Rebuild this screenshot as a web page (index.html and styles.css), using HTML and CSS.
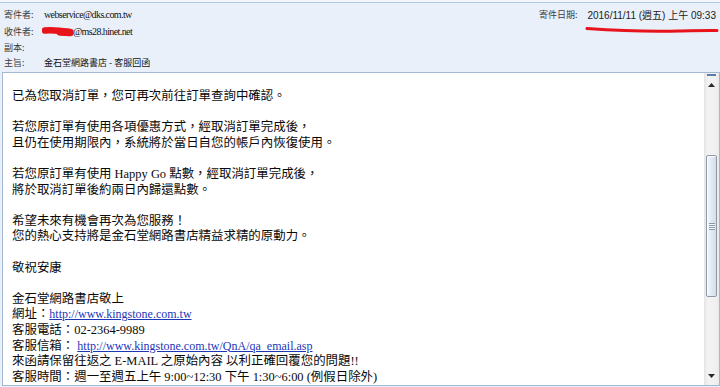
FILE: index.html
```html
<!DOCTYPE html>
<html lang="zh-Hant">
<head>
<meta charset="utf-8">
<title>金石堂網路書店 - 客服回函</title>
<link rel="stylesheet" href="styles.css">
</head>
<body>
<div class="window">
  <div class="topbar"></div>
  <div class="header">
    <div class="fields">
      <div class="row r1"><span class="lbl">寄件者:</span><span class="val mail">webservice@dks.com.tw</span></div>
      <div class="row r2"><span class="lbl">收件者:</span><span class="val mail"><svg class="redact" width="32" height="11" viewBox="0 0 32 11"><path d="M3 4.5 C10 3.5 18 4.5 27 6" fill="none" stroke="#e8141b" stroke-width="6.5" stroke-linecap="round"/><path d="M18 6 L28 6.5" stroke="#e8141b" stroke-width="7.5" stroke-linecap="round"/></svg>@ms28.hinet.net</span></div>
      <div class="row r3"><span class="lbl">副本:</span></div>
      <div class="row r4"><span class="lbl">主旨:</span><span class="val subj">金石堂網路書店 - 客服回函</span></div>
    </div>
    <div class="sent">
      <span class="lbl">寄件日期:</span><span class="date">2016/11/11 (週五) 上午 09:33</span>
      <svg class="underline" width="134" height="8" viewBox="0 0 134 8"><path d="M2 2.5 C30 4.5 60 6 95 5 C112 4.6 124 4.3 132 4.6" fill="none" stroke="#e8141b" stroke-width="3" stroke-linecap="round"/></svg>
    </div>
  </div>
  <div class="msg">
    <div class="body">
      <p>已為您取消訂單，您可再次前往訂單查詢中確認。</p>
      <p>若您原訂單有使用各項優惠方式，經取消訂單完成後，<br>且仍在使用期限內，系統將於當日自您的帳戶內恢復使用。</p>
      <p>若您原訂單有使用 Happy Go 點數，經取消訂單完成後，<br>將於取消訂單後約兩日內歸還點數。</p>
      <p>希望未來有機會再次為您服務！<br>您的熱心支持將是金石堂網路書店精益求精的原動力。</p>
      <p>敬祝安康</p>
      <p>金石堂網路書店敬上<br>網址：<a href="#">http://www.kingstone.com.tw</a><br>客服電話：02-2364-9989<br>客服信箱： <a href="#">http://www.kingstone.com.tw/QnA/qa_email.asp</a><br>來函請保留往返之 E-MAIL 之原始內容 以利正確回覆您的問題!!<br>客服時間：週一至週五上午 9:00~12:30 下午 1:30~6:00 (例假日除外)</p>
    </div>
    <div class="scrollbar">
      <div class="sb-btn sb-up">
        <span class="sb-cap"></span>
        <svg class="arrow" width="7" height="4" viewBox="0 0 7 4"><path d="M3.5 0 L7 4 L0 4 Z" fill="#2b2b2b"/></svg>
      </div>
      <div class="sb-track">
        <div class="thumb"><span class="grip"></span></div>
      </div>
      <div class="sb-btn sb-down">
        <svg class="arrow" width="7" height="4" viewBox="0 0 7 4"><path d="M0 0 L7 0 L3.5 4 Z" fill="#2b2b2b"/></svg>
      </div>
    </div>
  </div>
</div>
</body>
</html>
```
FILE: styles.css
```css
* { box-sizing: border-box; }
html, body { margin: 0; padding: 0; }
body {
  width: 720px;
  height: 387px;
  overflow: hidden;
  background: #e9f0fa;
  font-family: "Noto Sans CJK TC", sans-serif;
}
.window {
  height: 387px;
  display: flex;
  flex-direction: column;
  padding-left: 2px;
}
.topbar {
  height: 2px;
  margin-left: -2px;
  background: #f3f7fc;
}
.header {
  height: 70px;
  margin-left: -2px;
  border-top: 1px solid #b4c8e1;
  padding: 3px 4px 0 4px;
  display: flex;
  justify-content: space-between;
  position: relative;
}
.fields { display: flex; flex-direction: column; }
.row {
  display: flex;
  align-items: center;
  font-size: 9px;
  line-height: 1;
}
.r1, .r2 { height: 17px; }
.r3, .r4 { height: 15px; }
.lbl {
  width: 40px;
  color: #3c3c3c;
  font-size: 9px;
  font-family: "Noto Sans CJK TC", sans-serif;
}
.val { color: #111; }
.mail {
  font-family: "Liberation Serif", "Noto Sans CJK TC", serif;
  font-size: 10px;
  letter-spacing: -0.6px;
  display: flex;
  align-items: center;
}
.redact { margin-left: -2px; margin-right: -1px; }
.subj { font-size: 9px; }
.sent {
  height: 17px;
  display: flex;
  align-items: center;
  position: relative;
}
.sent .lbl { width: auto; margin-right: 10px; }
.date {
  font-family: "Liberation Sans", "Noto Sans CJK TC", sans-serif;
  font-size: 10px;
  color: #1b1b1b;
}
.underline {
  position: absolute;
  left: 46px;
  top: 20px;
}
.msg {
  height: 314px;
  width: 718px;
  border: 1px solid #a3b9d3;
  background: #fff;
  display: flex;
}
.body {
  flex: 1;
  overflow: hidden;
  padding: 16px 0 0 9px;
  font-family: "Liberation Serif", "Noto Sans CJK TC", serif;
  font-size: 12.45px;
  line-height: 15.6px;
  color: #0a0a0a;
  white-space: nowrap;
}
.body p { margin: 0 0 15.6px 0; }
.body a { color: #1c36b8; text-decoration: underline; font-size: 12px; }
.scrollbar {
  width: 15px;
  display: flex;
  flex-direction: column;
  background: linear-gradient(to right, #e4e4e4, #f3f3f3 25%, #f0f0f0 80%, #e9e9e9);
}
.sb-btn {
  height: 17px;
  display: flex;
  justify-content: center;
  position: relative;
}
.sb-up { align-items: flex-start; padding-top: 10px; }
.sb-down { align-items: flex-end; padding-bottom: 7px; }
.sb-cap {
  position: absolute;
  top: 1px;
  left: 3px;
  width: 9px;
  height: 2px;
  background: #5a7cab;
}
.sb-track {
  flex: 1;
  padding: 65px 2px 0 2px;
}
.thumb {
  height: 142px;
  border: 1px solid #8d99a7;
  border-radius: 2px;
  background: linear-gradient(to right, #f4f7fb, #dfe7f1 60%, #d3dde9);
  box-shadow: inset 1px 1px 0 #ffffff;
  display: flex;
  align-items: center;
  justify-content: center;
}
.grip {
  width: 6px;
  height: 7px;
  background: repeating-linear-gradient(to bottom, #8c97a4 0 1px, #f4f7fb 1px 2px);
}
```
